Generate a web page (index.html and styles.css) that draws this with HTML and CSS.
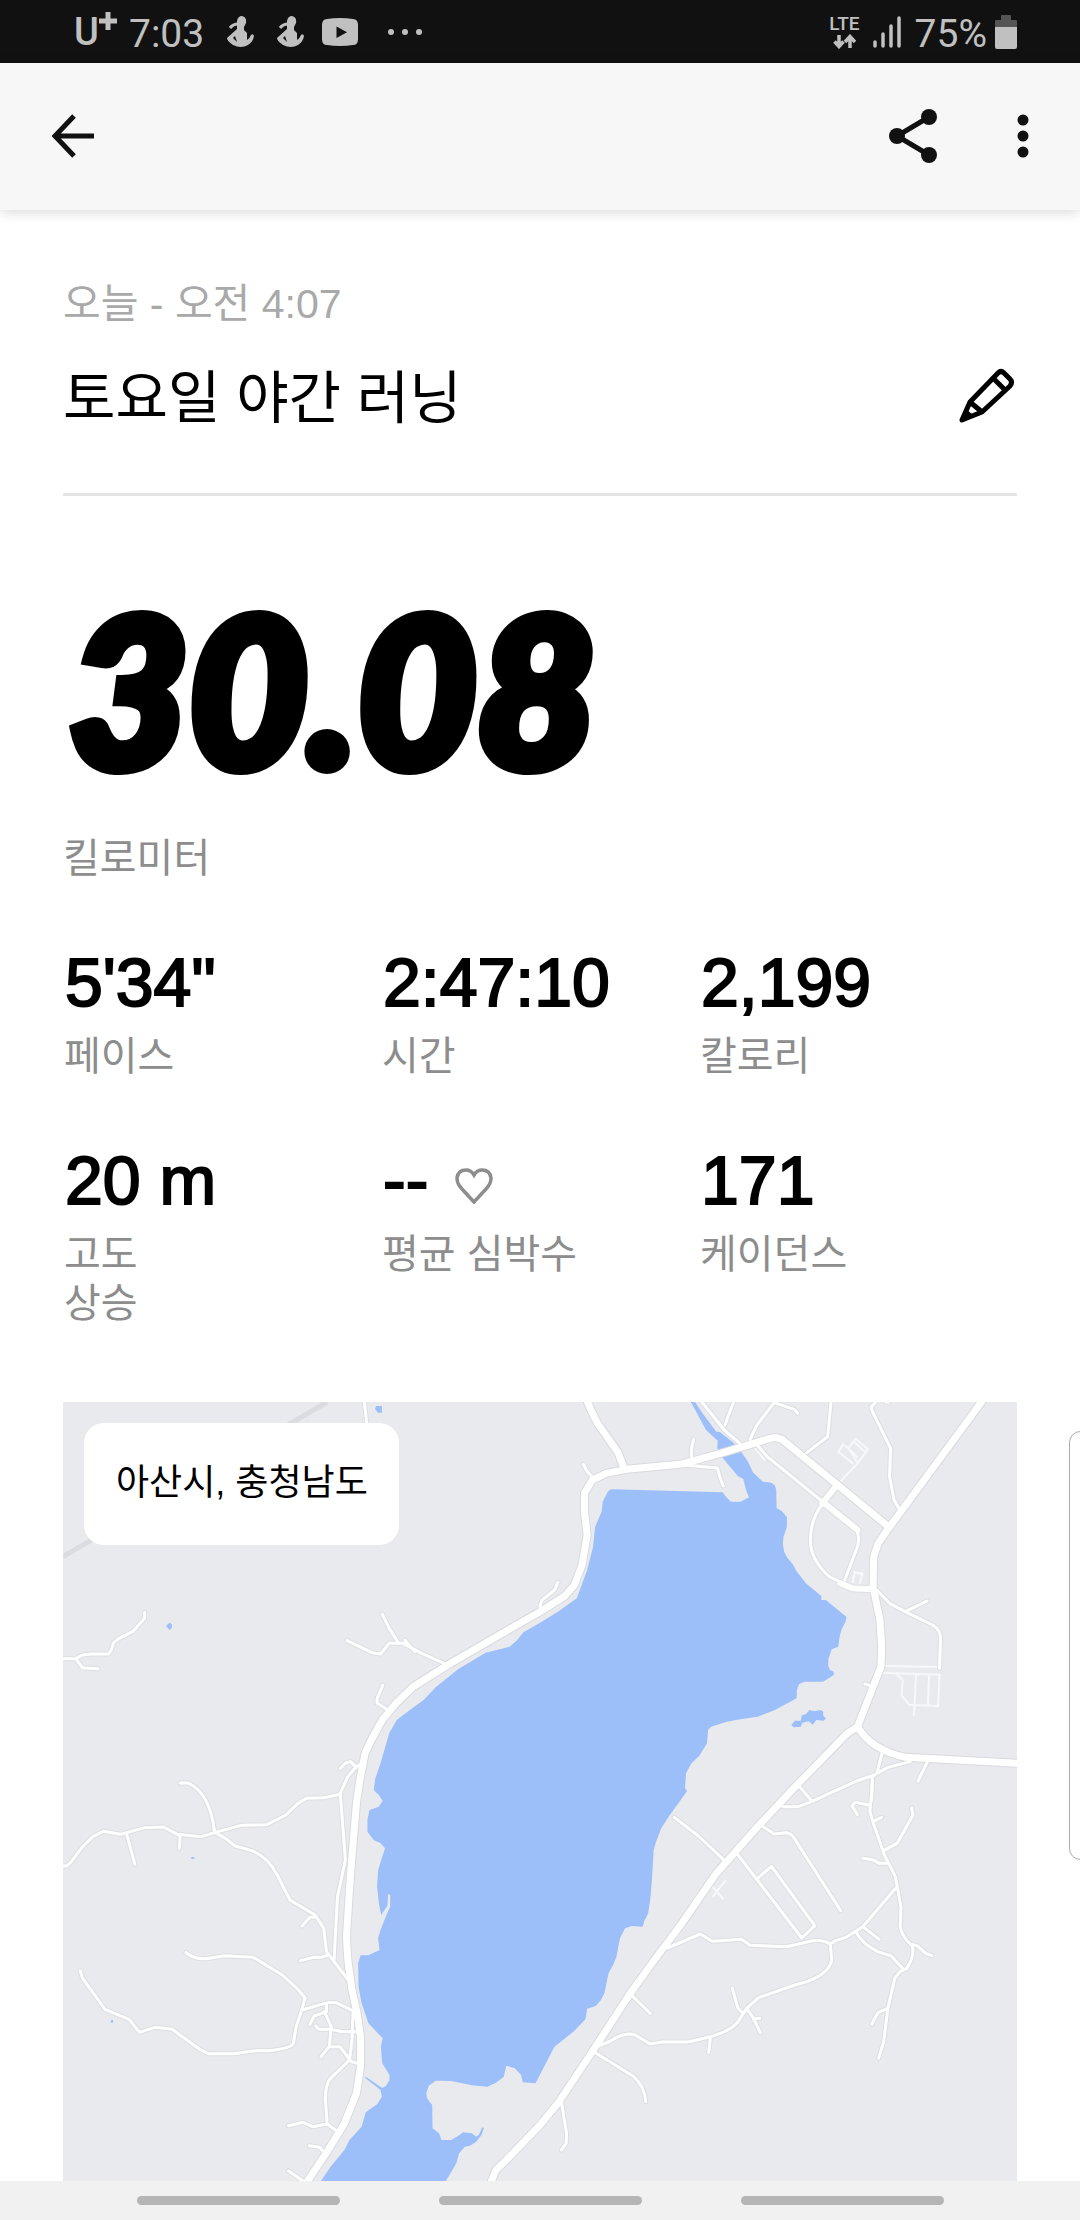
FILE: index.html
```html
<!DOCTYPE html>
<html lang="ko">
<head>
<meta charset="utf-8">
<meta name="viewport" content="width=device-width, initial-scale=1">
<title>토요일 야간 러닝</title>
<link rel="stylesheet" href="styles.css">
</head>
<body>
<div class="status">
  <div class="status-group">
    <span class="carrier">U<svg width="18" height="18" viewBox="0 0 18 18" aria-hidden="true"><path d="M9 0v18M0 9h18" stroke="currentColor" stroke-width="5"/></svg></span>
    <span class="clock">7:03</span>
    <svg class="runner" width="27" height="32" viewBox="0 0 27 32" aria-hidden="true"><use href="#runner"/></svg>
    <svg class="runner" width="27" height="32" viewBox="0 0 27 32" aria-hidden="true"><use href="#runner"/></svg>
    <svg class="video" width="38" height="28" viewBox="0 0 38 28" aria-hidden="true"><path fill="currentColor" fill-rule="evenodd" d="M6 1Q19-1 32 1Q37 1 37 7V21Q37 27 32 27Q19 29 6 27Q1 27 1 21V7Q1 1 6 1ZM15.500 8.500V20L26 14.200Z"/></svg>
    <svg class="more" width="36" height="8" viewBox="0 0 36 8" aria-hidden="true"><g fill="currentColor"><circle cx="4" cy="4" r="3"/><circle cx="18" cy="4" r="3"/><circle cx="32" cy="4" r="3"/></g></svg>
  </div>
  <div class="status-group">
    <span class="lte">LTE<svg width="23" height="15" viewBox="0 0 23 15" aria-hidden="true"><path d="M6 1v11M1.500 7.500 6 12.500l4.500-5M17 14V3M12 8l5-5.500L22 8" fill="none" stroke="currentColor" stroke-width="3.500"/></svg></span>
    <svg class="signal" width="28" height="32" viewBox="0 0 28 32" aria-hidden="true"><path d="M2 26v4M10 18v12M18 10v20M26 2v28" stroke="currentColor" stroke-width="3.500" stroke-linecap="round"/></svg>
    <span class="charge">75%</span>
    <svg width="22" height="34" viewBox="0 0 22 34" aria-hidden="true"><path d="M0 12V6q0-1 1-1h5V1q0-1 1-1h8q1 0 1 1v4h5q1 0 1 1v6z" fill="#555"/><path d="M0 12h22v20q0 2-2 2H2q-2 0-2-2z" fill="currentColor"/></svg>
  </div>
</div>

<header class="appbar">
  <button class="icon-button" aria-label="뒤로"><svg width="42" height="44" viewBox="0 0 42 44"><path d="M22 2 3 22l19 20M3 22h39" fill="none" stroke="currentColor" stroke-width="5"/></svg></button>
  <div class="actions">
    <button class="icon-button" aria-label="공유"><svg width="48" height="54" viewBox="0 0 48 54"><path d="M40 8 8 27l32 19" fill="none" stroke="currentColor" stroke-width="5"/><g fill="currentColor"><circle cx="40" cy="8" r="8"/><circle cx="8" cy="27" r="8"/><circle cx="40" cy="46" r="8"/></g></svg></button>
    <button class="icon-button" aria-label="더보기"><svg width="12" height="44" viewBox="0 0 12 44"><g fill="currentColor"><circle cx="6" cy="6" r="5.500"/><circle cx="6" cy="22" r="5.500"/><circle cx="6" cy="38" r="5.500"/></g></svg></button>
  </div>
</header>

<main class="content">
  <section class="heading">
    <div>
      <p class="date">오늘 - 오전 4:07</p>
      <h1 class="title">토요일 야간 러닝</h1>
    </div>
    <button class="icon-button edit" aria-label="이름 편집"><svg width="56" height="56" viewBox="0 0 56 56" fill="none" stroke="currentColor" stroke-width="5" stroke-linejoin="round"><path d="M3 52 11 34 39 5Q42 2 45 5L51 11Q54 14 51 18L23 44ZM11 34 23 44M34 10 46 22"/><path d="M3 52 14 47 7 41Z" fill="currentColor" stroke="none"/></svg></button>
  </section>

  <section>
    <p class="distance">30.08</p>
    <p class="label">킬로미터</p>
  </section>

  <dl class="stats">
    <div class="stat"><dd class="value">5'34"</dd><dt class="label">페이스</dt></div>
    <div class="stat"><dd class="value">2:47:10</dd><dt class="label">시간</dt></div>
    <div class="stat"><dd class="value">2,199</dd><dt class="label">칼로리</dt></div>
    <div class="stat"><dd class="value">20 m</dd><dt class="label">고도<br>상승</dt></div>
    <div class="stat"><dd class="value">-- <svg class="heart" width="38" height="38" viewBox="0 0 38 38" aria-hidden="true"><path d="M19 36 7 23Q2 18 2 12Q3 4 11 4Q16 4 19 9Q22 4 27 4Q35 4 36 12Q36 18 31 23Z" fill="none" stroke="#8d8d8d" stroke-width="3.500"/></svg></dd><dt class="label">평균 심박수</dt></div>
    <div class="stat"><dd class="value">171</dd><dt class="label">케이던스</dt></div>
  </dl>

  <section class="map">
    <svg class="map-art" viewBox="183 66 2770 2337" preserveAspectRatio="none" role="img" aria-label="지도">
      <defs>
        <g id="minor">
          <g>
            <path d="M1058 66 1066 140M183 836H220L240 825 265 822H315L322 812 330 788 345 776 385 755 420 715V697M220 836 240 864 285 866"/>
            <path d="M1300 855 1225 820 1170 790 1130 790 1105 822 1080 818 1008 782M1155 785 1130 745 1110 702M1175 780 1205 815M1127 990 1095 970V955L1112 915"/>
            <path d="M1055 1145 1030 1165 1010 1190 988 1240M1035 1162 1018 1145 1005 1148 988 1165"/>
          </g>
          <g transform="translate(1568 0)">
            <path d="M155 295 135 272 126 252M440 235V205L446 178M420 255 515 264 522 290 532 318M0 680 5 662 42 630 52 607"/>
            <path d="M470 66 535 150 580 190M562 66 537 135M610 178 630 135 680 68 738 88 748 100M845 66 835 170 775 218M630 195 660 230 820 365"/>
            <path d="M975 66 962 80 964 92 1018 205 1015 290 1028 360 1045 390M1005 66H1012"/>
            <path d="M820 372Q785 420 785 480T840 590L880 610M920 450Q930 480 920 505L885 600"/>
            <path d="M980 632 1015 670 1060 695 1140 735Q1163 750 1163 775L1160 865M1062 694 1124 663M943 912 960 917"/>
            <path d="M993 1120 978 1180 965 1190 963 1260M1075 1145 1010 1162 970 1185 915 1205 790 1264 750 1280 705 1280M755 1222 790 1264M1125 1145 1098 1203"/>
          </g>
          <g transform="translate(0 1200)">
            <path d="M183 258H193L205 248 240 200 270 170 300 154 350 163 420 143 475 141 515 163 585 170 625 157 700 136 775 134 830 105 865 70 890 55 940 53 988 43M988 40 1003 240 980 350 970 540"/>
            <path d="M523 9H547Q610 40 623 155M368 163 392 253M523 163 521 205M623 157 655 175 683 198 720 208Q775 225 805 285L842 360 915 405 940 445 948 515 1015 605M915 412H900L877 438M955 525 930 532H910L872 542"/>
            <path d="M540 518Q570 540 600 536L650 527 735 532 820 585 862 625 886 653 876 690 860 740 852 790Q845 805 780 812H740L680 821H605L580 808 500 748 450 742 405 757 375 718 305 688 240 595 233 573"/>
            <path d="M876 690 955 667 975 668 1025 692M948 670V695L912 708 900 733M942 695 962 740 956 800 932 830M917 738 925 748H960L995 755H1045M956 800H987L1020 845 1045 852M1025 700 1022 780 1015 840 960 895Q945 910 945 960L950 1032 980 1055M950 1032 908 1040 880 1027 838 1037M943 1120 928 1102 898 1097M880 1203 838 1173"/>
          </g>
          <g transform="translate(1568 1200)">
            <path d="M966 0 958 95 968 130 1000 225 1032 290 1048 380 1046 440Q1050 470 1080 497 1090 525 1065 565L1045 575 1030 595 1010 685 998 785 983 835M958 76 915 67 906 77 922 105M968 124 992 112M998 212 1037 190 1083 105 1079 84M1006 250 985 250 968 240 938 235M1035 322 937 440 888 472 858 482 843 492Q815 475 780 485L715 500 610 496 585 478 500 484 465 462 370 504M937 440 985 478M918 457Q935 490 980 515L1020 528 1055 568M1080 493 1095 497 1120 520 1138 527M1010 685 982 697 963 732"/>
            <path d="M843 492 847 540Q840 580 775 605L740 615 635 653 600 685 575 725Q550 755 495 770L430 786H355L320 792 275 764Q245 755 205 783L160 802M558 624 575 685 590 700M600 685 618 712 640 758M620 717 638 715M495 770 490 817M268 648 320 700M160 818 270 888Q305 920 307 965M62 965 77 1060 76 1090 62 1110"/>
            <path d="M390 112 460 168 532 238M575 225 760 474 798 437 672 259 632 295M648 140 680 162 715 158Q728 160 735 170L873 392"/>
          </g>
        </g>
        <g id="medium">
          <path d="M2388 365 2490 450M2388 370 2430 315M2440 610 2475 625 2530 628"/>
        </g>
        <g id="major">
          <path d="M893 2403 950 2315 1000 2230 1035 2140 1047 2060 1047 1970 1037 1900 1022 1830 1010 1740 1006 1670 1018 1480 1035 1270 1045 1200 1060 1120 1078 1080 1110 1020 1150 970 1200 920 1300 855 1450 765 1568 695 1640 648 1668 615 1690 555 1705 465 1697 395 1697 340 1720 300 1760 280 1820 268 1980 252 2100 218 2230 177 2250 172 2270 178 2580 440"/>
          <path d="M1706 66 1718 95 1735 130 1795 218 1812 265"/>
          <path d="M2850 66 2580 445 2550 490 2537 530 2535 620 2555 720 2560 800 2558 860 2520 960 2490 1040 2460 1060 2300 1230 2200 1340 2080 1480 1980 1630 1900 1740 1830 1840 1720 2015 1620 2170 1568 2235 1470 2340 1440 2370 1427 2403"/>
          <path d="M2490 1040Q2530 1110 2630 1132L2953 1150"/>
        </g>
      </defs>
      <rect class="land" x="183" y="66" width="2770" height="2337"/>
      <path class="rail" d="M183 530 950 66"/>
      <g class="water">
        <path d="M1773 328 2098 337 2108 350 2122 365 2150 365 2175 352 2168 335 2158 297 2143 289 2098 233 2083 205 2084 182 2050 150 2030 112 2006 66 2018 66 2040 100 2080 155 2090 156 2128 187 2152 215 2172 245 2186 277 2215 305 2240 308 2250 316 2254 330 2255 385 2270 393 2285 412 2285 440 2275 470 2273 493 2277 515 2286 533 2302 553 2312 572 2340 610 2385 648 2385 660 2398 660 2458 711 2455 725 2443 750 2438 770 2434 800 2415 808 2405 838 2405 858 2410 870 2421 875 2421 885 2390 905 2335 905 2320 913 2314 930 2313 955 2250 990 2200 1010 2150 1018 2110 1025 2065 1040 2056 1050 2053 1090 2030 1128 2008 1150 1992 1180 1989 1225 1995 1233 1975 1262 1945 1305 1920 1345 1905 1385 1898 1410 1893 1500 1888 1560 1882 1600 1870 1625 1866 1640 1835 1638 1815 1645 1800 1675 1790 1730 1780 1755 1767 1780 1755 1840 1745 1860 1730 1878 1705 1886 1700 1918 1665 1955 1610 2000 1595 2030 1570 2080 1555 2110 1518 2107 1513 2085 1495 2065 1470 2057 1463 2090 1440 2108 1415 2120 1370 2116 1310 2103 1265 2102 1245 2117 1238 2140 1240 2155 1255 2175 1256 2245 1275 2260 1282 2280 1310 2280 1330 2268 1345 2257 1370 2260 1383 2270 1392 2262 1400 2242 1405 2244 1398 2265 1383 2285 1365 2297 1350 2300 1333 2320 1325 2350 1295 2403 932 2403 960 2360 1000 2310 1015 2280 1050 2240 1062 2197 1095 2173 1109 2150 1105 2130 1060 2093 1062 2090 1110 2124 1120 2118 1131 2100 1131 2085 1110 2050 1106 2000 1111 1975 1070 1930 1050 1870 1041 1820 1040 1750 1047 1726 1070 1726 1102 1710 1098 1675 1105 1650 1120 1610 1133 1580 1133 1545 1127 1543 1125 1577 1107 1605 1100 1570 1095 1520 1098 1470 1110 1430 1118 1405 1105 1390 1085 1380 1067 1355 1067 1320 1073 1290 1100 1280 1111 1262 1100 1245 1085 1230 1090 1195 1105 1150 1130 1060 1152 1020 1190 990 1230 960 1265 922 1330 868 1410 818 1480 800 1500 782 1520 757 1568 728 1620 695 1675 655 1705 570 1722 500 1728 440 1747 395 1750 365 1765 335Z"/>
        <path d="M2298 1035 2308 1022 2325 1022 2328 1006 2340 1003 2350 990 2365 994 2380 990 2390 994V1006L2398 1016 2392 1022 2370 1020 2360 1034 2348 1024 2330 1028 2325 1040 2304 1042Z"/>
        <path d="M1092 78H1109V98H1098L1089 88ZM482 738 492 728 499 733V744L493 750ZM555 1431H562L566 1436H556ZM322 1920H328V1928H322Z"/>
      </g>
      <path class="lane" d="M2440 305 2490 250 2520 208 2485 176 2464 204 2448 194 2434 215 2478 252M2464 204 2490 248M2458 200 2490 232M2478 184 2512 216M2192 203 2222 242M2475 608 2482 578 2505 580 2496 612M2478 574 2504 584M2565 858 2728 861M2560 878 2728 884 2724 978 2640 974 2618 946 2621 900 2600 880M2660 880 2654 1008M2698 884 2694 976M2067 1518 2101 1558M2107 1500 2070 1550"/>
      <use class="minor-case" href="#minor"/>
      <use class="major-case" href="#major"/>
      <use class="medium-case" href="#medium"/>
      <use class="minor-line" href="#minor"/>
      <use class="medium-line" href="#medium"/>
      <use class="major-line" href="#major"/>
    </svg>
    <span class="place">아산시, 충청남도</span>
  </section>
</main>

<nav class="navbar" aria-label="시스템 탐색">
  <button class="pill" aria-label="최근 앱"></button>
  <button class="pill" aria-label="홈"></button>
  <button class="pill" aria-label="뒤로 가기"></button>
</nav>
<div class="edge-handle"></div>

<svg class="symbols" aria-hidden="true">
  <symbol id="runner" viewBox="0 0 27 32"><path fill="currentColor" fill-rule="evenodd" d="M10 5Q11 0 15 0Q20 1 19 7L17 11V14L20 17V24Q23 22 24 19Q26 17 27 20Q26 26 21 29Q14 33 6 29Q0 25 0 22L10 13V9ZM6 22 10 26 8 20Z"/><path d="M3 12Q6 8 11 8" fill="none" stroke="currentColor" stroke-width="3"/></symbol>
</svg>
</body>
</html>
```
FILE: styles.css
```css
* { box-sizing: border-box; }

body {
  margin: 0;
  display: flex;
  flex-direction: column;
  min-height: 100vh;
  position: relative;
  overflow-x: hidden;
  background: #fff;
  color: #000;
  font-family: "Liberation Sans", "Noto Sans CJK KR", sans-serif;
}

p, h1, dl, dd, dt { margin: 0; font-weight: 400; }
svg { display: block; flex: none; }
.symbols { position: absolute; top: 0; width: 0; height: 0; }

.status {
  display: flex;
  justify-content: space-between;
  height: 63px;
  padding: 0 63px 0 74px;
  background: #111;
  color: #c0c0c0;
  font-family: Roboto, sans-serif;
}
.status-group { display: flex; align-items: center; }
.carrier {
  display: flex;
  align-items: flex-start;
  width: 55px;
  font-size: 38px;
  font-weight: 500;
  line-height: 40px;
}
.clock { width: 98px; font-size: 39px; line-height: 48px; padding-top: 4px; }
.runner { margin-right: 23px; }
.video { margin-left: -6px; }
.more { margin-left: 28px; }
.lte {
  display: flex;
  flex-direction: column;
  align-items: center;
  font-size: 19px;
  font-weight: 500;
  line-height: 18px;
  gap: 1px;
}
.signal { margin: 0 14px 0 13px; }
.charge { margin-right: 8px; padding-top: 4px; font-size: 39px; line-height: 48px; }

.appbar {
  display: flex;
  align-items: center;
  justify-content: space-between;
  height: 147px;
  padding: 0 51px 1px 52px;
  background: #f7f7f7;
  box-shadow: 0 2px 12px rgba(0, 0, 0, .16);
}
.actions { display: flex; align-items: center; gap: 80px; }
.icon-button { padding: 0; border: 0; background: none; color: #111; }

.content { padding: 70px 63px 0; }

.heading {
  display: flex;
  align-items: flex-end;
  justify-content: space-between;
  padding-bottom: 59px;
  border-bottom: 3px solid #e3e5e5;
}
.date { margin-bottom: 34px; color: #a9a9a9; font-size: 41px; line-height: 48px; }
.title { font-size: 57px; line-height: 72px; }
.edit { margin: 0 2px 10px 0; color: #000; }

.distance {
  margin-top: 92px;
  padding-left: 6px;
  font-family: Lato, sans-serif;
  font-size: 206px;
  font-style: italic;
  font-weight: 900;
  line-height: 200px;
  -webkit-text-stroke: 12px #000;
}
.label { color: #8d8d8d; font-size: 40px; line-height: 49px; }
.distance + .label { margin-top: 46px; }

.stats {
  display: grid;
  grid-template-columns: repeat(3, 1fr);
  row-gap: 63px;
  margin: 63px 0 74px;
}
.stat { display: flex; flex-direction: column; gap: 14px; padding-left: 1px; }
.value {
  height: 72px;
  padding-left: 1px;
  font-size: 68px;
  line-height: 72px;
  -webkit-text-stroke: 2px #000;
}
.heart { display: inline-block; margin-left: 8px; }

.map { position: relative; }
.map-art { width: 100%; height: auto; aspect-ratio: 954 / 779; overflow: hidden; }
.map-art path { vector-effect: non-scaling-stroke; stroke-linejoin: round; }
.map-art use { fill: none; stroke-linecap: round; }
.land { fill: #e8eaee; }
.rail { stroke: #dadce0; stroke-width: 5; }
.water { fill: #9cbffa; }
.lane { fill: none; stroke: #f7f8f9; stroke-width: 2; }
.minor-case { stroke: #dcdee2; stroke-width: 5; }
.medium-case { stroke: #dcdee2; stroke-width: 8; }
.major-case { stroke: #d8dade; stroke-width: 9; }
.minor-line { stroke: #fff; stroke-width: 3; }
.medium-line { stroke: #fff; stroke-width: 6; }
.major-line { stroke: #fff; stroke-width: 7; }

.place {
  position: absolute;
  top: 21px;
  left: 21px;
  padding: 36px 31px 38px 32px;
  border-radius: 20px;
  background: #fff;
  font-size: 36px;
  line-height: 48px;
}

.navbar {
  display: flex;
  align-items: center;
  justify-content: center;
  gap: 99px;
  height: 39px;
  background: #f1f1f1;
}
.pill { width: 203px; height: 9px; padding: 0; border: 0; border-radius: 5px; background: #b5b5b5; }

.edge-handle {
  position: absolute;
  top: 1431px;
  right: -12px;
  width: 23px;
  height: 429px;
  border: 1px solid #aaa;
  border-radius: 12px;
}
```
